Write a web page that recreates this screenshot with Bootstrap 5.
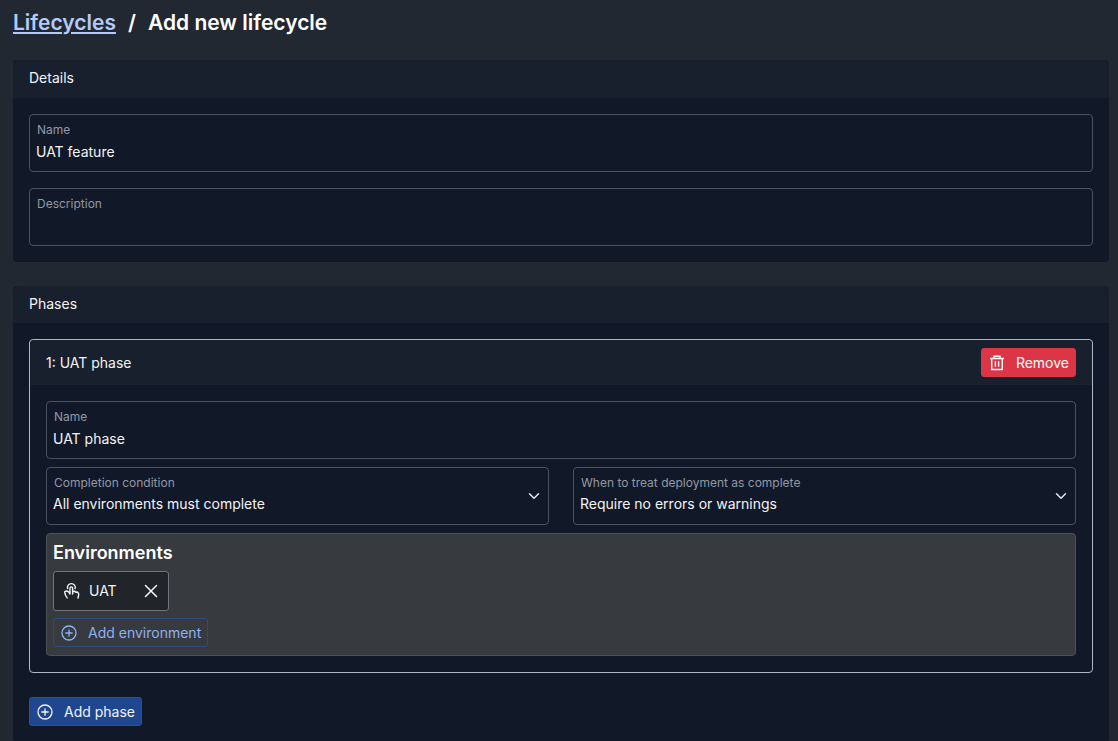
<!DOCTYPE html>
<html lang="en" data-bs-theme="dark">
<head>
<meta charset="utf-8">
<meta name="viewport" content="width=device-width, initial-scale=1">
<title>Add new lifecycle</title>
<link href="https://cdn.jsdelivr.net/npm/bootstrap@5.3.0/dist/css/bootstrap.min.css" rel="stylesheet">
<style>
  body { background: #222831; color: #f3f4f6; font-family: Inter, "Liberation Sans", sans-serif; font-size: 14px; line-height: 20px; }
  .page { padding: 8px 9px 0 13px; }
  .page-title { font-size: 21px; line-height: 30px; font-weight: 600; margin-bottom: 22px; display: flex; gap: 12px; }
  .page-title a { color: #b4cbfa; text-underline-offset: 2px; }
  .panel { background: #111827; border: 0; border-radius: 4px; color: inherit; }
  .panel > .card-header { background: #181f2d; border: 0; padding: 8px 16px 9px; }
  .panel-details > .card-header { padding-bottom: 10px; }
  .phase { background: #111827; border: 1px solid #b0b6c2; border-radius: 4px; color: inherit; }
  .phase > .card-header { background: #181f2d; border: 0; padding: 8px 16px; }
  .field > .form-control, .field > .form-select {
    height: 58px; padding: 26px 6px 10px; border: 1px solid #4b5361; border-radius: 4px;
    background-color: #111827; color: #f3f4f6; font-size: 14px; line-height: 20px;
  }
  .field > .form-control { padding-top: 25px; padding-bottom: 11px; }
  .field > .form-select {
    background-image: url("data:image/svg+xml,%3csvg xmlns='http://www.w3.org/2000/svg' viewBox='0 0 16 16'%3e%3cpath fill='none' stroke='%23e2e6ee' stroke-linecap='round' stroke-linejoin='round' stroke-width='2' d='m2 5 6 6 6-6'/%3e%3c/svg%3e");
    background-size: 12px; background-position: right 8px center;
  }
  .field > label, .field > .form-control:focus ~ label, .field > .form-control:not(:placeholder-shown) ~ label, .field > .form-select ~ label {
    height: auto; padding: 5px 7px; font-size: 12px; line-height: 20px; color: #9299a5; opacity: 1; transform: none;
  }
  .action { display: inline-flex; align-items: center; gap: 11px; padding: 4px 6px 4px 7px; border-radius: 3px; font-size: 14px; line-height: 19px; }
  .action svg { width: 16px; height: 16px; }
  .btn-add { background: #1f478f; border-color: #23529f; color: #f3f4f6; }
  .btn-add-outline, .btn-add-outline:hover { border: 1px solid #2a4a85; color: #8fb0f5; }
  .environments { background: #373a3f; border: 1px solid #4d5257; border-radius: 4px; padding: 7px 6px 8px; }
  .environments h2 { font-size: 18px; line-height: 24px; font-weight: 600; margin-bottom: 6px; color: #fff; }
  .env-tag { background: #212529; border: 1px solid #6f757b; border-radius: 3px; height: 40px; padding: 0 9px; width: 116px; margin-bottom: 7px; }
  .env-tag button { color: #fff; line-height: 1; display: flex; }
</style>
</head>
<body>
<main class="page">
  <h1 class="page-title"><a href="#">Lifecycles</a><span>/</span><span>Add new lifecycle</span></h1>

  <section class="card panel panel-details mb-4">
    <div class="card-header">Details</div>
    <div class="card-body d-flex flex-column gap-3">
      <div class="form-floating field">
        <input type="text" class="form-control" id="name" value="UAT feature" placeholder=" ">
        <label for="name">Name</label>
      </div>
      <div class="form-floating field">
        <input type="text" class="form-control" id="description" placeholder=" ">
        <label for="description">Description</label>
      </div>
    </div>
  </section>

  <section class="card panel">
    <div class="card-header">Phases</div>
    <div class="card-body">
      <div class="card phase mb-4">
        <div class="card-header d-flex align-items-center justify-content-between">
          <span>1: UAT phase</span>
          <button type="button" class="btn btn-danger action">
            <svg viewBox="0 0 16 16" fill="none" stroke="currentColor" stroke-width="1.4" aria-hidden="true"><path d="M1 3.500h14M5 3.300V1.200h6v2.100M2.700 3.700v10.800h10.600V3.700M6.400 6.300v5.400M9.600 6.300v5.400"/></svg>
            Remove
          </button>
        </div>
        <div class="card-body d-flex flex-column gap-2">
          <div class="form-floating field">
            <input type="text" class="form-control" id="phase-name" value="UAT phase" placeholder=" ">
            <label for="phase-name">Name</label>
          </div>
          <div class="row">
            <div class="col-6">
              <div class="form-floating field">
                <select class="form-select" id="condition"><option>All environments must complete</option></select>
                <label for="condition">Completion condition</label>
              </div>
            </div>
            <div class="col-6">
              <div class="form-floating field">
                <select class="form-select" id="treat"><option>Require no errors or warnings</option></select>
                <label for="treat">When to treat deployment as complete</label>
              </div>
            </div>
          </div>
          <div class="environments d-flex flex-column align-items-start">
            <h2>Environments</h2>
            <div class="env-tag d-flex align-items-center">
              <svg width="18" height="18" viewBox="0 0 18 18" fill="none" stroke="currentColor" stroke-width="1.4" stroke-linecap="round" stroke-linejoin="round" aria-hidden="true"><path d="M7 12V6.200a1.300 1.300 0 0 1 2.600 0V12M9.600 9.500l2.200-.3.700 1 1.800-.2 1.300 1.400v2L15 16M7 12 5.400 9.700Q3.400 8.200 1.700 9.800L2.400 13l1.800 3M4.600 6.600A3.900 3.900 0 1 1 12.100 6.600"/></svg>
              <span class="ms-2">UAT</span>
              <button type="button" class="btn border-0 p-0 ms-auto" aria-label="Remove UAT">
                <svg width="16" height="16" viewBox="0 0 16 16" stroke="currentColor" stroke-width="1.500" stroke-linecap="round" aria-hidden="true"><path d="M2.500 2.500l11 11M13.500 2.500l-11 11"/></svg>
              </button>
            </div>
            <button type="button" class="btn btn-add-outline action">
              <svg viewBox="0 0 16 16" fill="none" stroke="currentColor" stroke-width="1.300" stroke-linecap="round" aria-hidden="true"><circle cx="8" cy="8" r="7"/><path d="M8 4.800v6.400M4.800 8h6.400"/></svg>
              Add environment
            </button>
          </div>
        </div>
      </div>
      <button type="button" class="btn btn-add action">
        <svg viewBox="0 0 16 16" fill="none" stroke="currentColor" stroke-width="1.300" stroke-linecap="round" aria-hidden="true"><circle cx="8" cy="8" r="7"/><path d="M8 4.800v6.400M4.800 8h6.400"/></svg>
        Add phase
      </button>
    </div>
  </section>
</main>
<script src="https://cdn.jsdelivr.net/npm/bootstrap@5.3.0/dist/js/bootstrap.bundle.min.js"></script>
</body>
</html>
